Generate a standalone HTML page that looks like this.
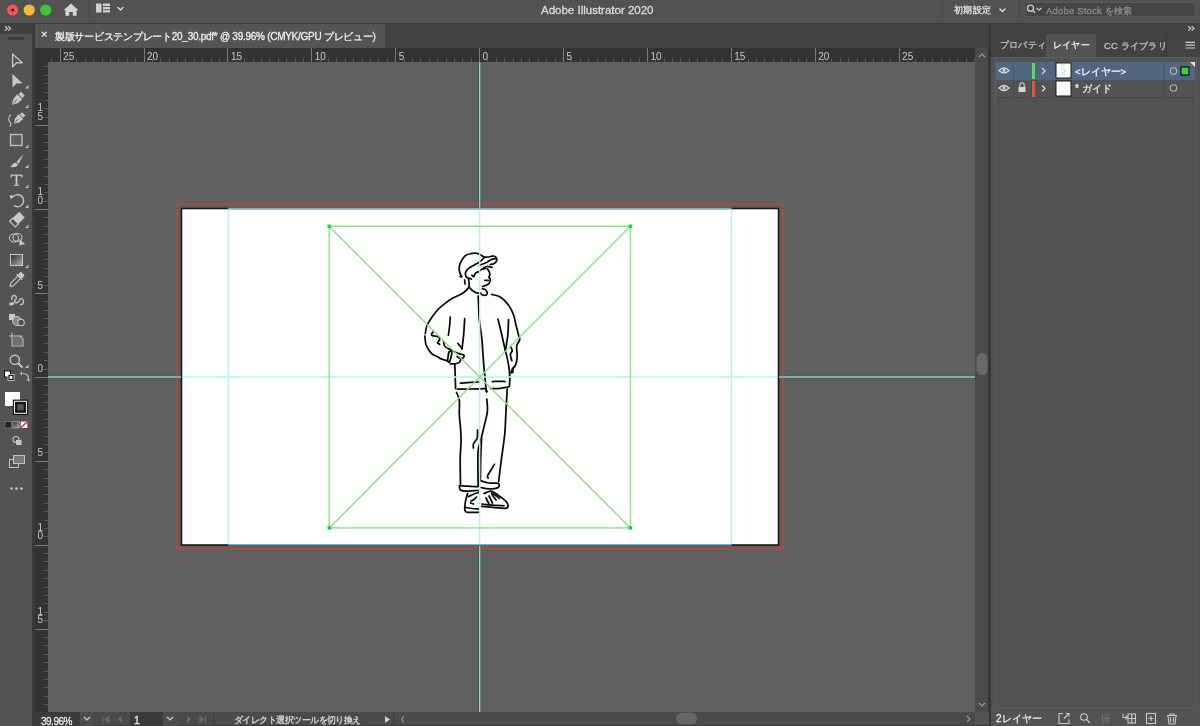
<!DOCTYPE html>
<html><head><meta charset="utf-8">
<style>
*{margin:0;padding:0;box-sizing:border-box}
html,body{width:1200px;height:726px;overflow:hidden;background:#606060;font-family:"Liberation Sans",sans-serif;color:#d6d6d6}
.a{position:absolute}
.t{position:absolute;white-space:nowrap;line-height:1;font-weight:500;will-change:transform;-webkit-text-stroke:0.3px currentColor}
#title{left:0;top:0;width:1200px;height:23px;background:#525252}
#tline{left:0;top:23px;width:1200px;height:1px;background:#3e3e3e}
#tool{left:0;top:23px;width:33px;height:703px;background:#535353}
#toolhdr{left:0;top:23px;width:33px;height:10.5px;background:#404040}
#gap{left:32px;top:23px;width:3px;height:703px;background:#3a3a3a}
#tabstrip{left:35px;top:23px;width:954px;height:25px;background:#424242}
#tab{left:35px;top:23px;width:350px;height:25px;background:#545454}
#rulerT{left:35px;top:48px;width:940px;height:14px;background:#333333}
#rulerL{left:35px;top:48px;width:13px;height:664px;background:#333333}
#canvas{left:48px;top:62px;width:927px;height:650px;background:#606060}
#vscroll{left:975px;top:48px;width:14px;height:678px;background:#4b4b4b}
#sep{left:988px;top:23px;width:3px;height:703px;background:#363636}
#panel{left:991px;top:23px;width:209px;height:703px;background:#535353}
#panelhdr{left:991px;top:23px;width:209px;height:11px;background:#424242}
#tabrow{left:991px;top:34px;width:209px;height:23px;background:#434343}
#status{left:35px;top:712px;width:954px;height:14px;background:#4a4a4a}
</style></head>
<body>
<div id="title" class="a"></div>
<div id="tool" class="a"></div>
<div id="toolhdr" class="a"></div>
<div id="gap" class="a"></div>
<div id="tabstrip" class="a"></div>
<div id="tab" class="a"></div>
<div id="rulerT" class="a"></div>
<div id="rulerL" class="a"></div>
<div id="canvas" class="a"></div>
<div id="vscroll" class="a"></div>
<div id="sep" class="a"></div>
<div id="panel" class="a"></div>
<div id="panelhdr" class="a"></div>
<div id="tabrow" class="a"></div>
<div id="status" class="a"></div>
<div id="tline" class="a"></div>

<!-- title bar content -->
<svg class="a" style="left:0;top:0" width="1200" height="23">
  <circle cx="12.6" cy="10" r="5.6" fill="#f25a55"/>
  <circle cx="12.6" cy="10" r="1.6" fill="#5a0c0a"/>
  <circle cx="29.2" cy="10" r="5.6" fill="#f5b93a"/>
  <circle cx="45.7" cy="10" r="5.6" fill="#3cc63f"/>
  <path d="M71 3.5 L78.5 10.2 L76.6 10.2 L76.6 15.7 L72.8 15.7 L72.8 12 L69.2 12 L69.2 15.7 L65.4 15.7 L65.4 10.2 L63.5 10.2 Z" fill="#d4d4d4"/>
  <rect x="88.5" y="0" width="1" height="17" fill="#474747"/>
  <rect x="96" y="3.5" width="5.5" height="9" fill="#d0d0d0"/>
  <rect x="103" y="3.5" width="7" height="2.5" fill="#d0d0d0"/>
  <rect x="103" y="7" width="7" height="2.3" fill="#d0d0d0"/>
  <rect x="103" y="10.2" width="7" height="2.3" fill="#d0d0d0"/>
  <path d="M117.5 7 L120.5 10 L123.5 7" fill="none" stroke="#d8d8d8" stroke-width="1.4"/>
  <rect x="942" y="0" width="1" height="17" fill="#474747"/>
  <path d="M999.5 8.5 L1002.5 11.5 L1005.5 8.5" fill="none" stroke="#d8d8d8" stroke-width="1.4"/>
  <rect x="1018" y="0" width="1" height="17" fill="#474747"/>
  <rect x="1025" y="2.5" width="170" height="14" rx="2" fill="#464646" stroke="#595959" stroke-width="1"/>
  <circle cx="1030.5" cy="8.2" r="3" fill="none" stroke="#c8c8c8" stroke-width="1.3"/>
  <path d="M1032.6 10.3 L1035 12.8" stroke="#c8c8c8" stroke-width="1.5"/>
  <path d="M1036.5 8 L1039 10.3 L1041.5 8" fill="none" stroke="#c8c8c8" stroke-width="1.2"/>
</svg>
<div class="t" style="left:541px;top:4.5px;font-size:11.5px;color:#dcdcdc">Adobe Illustrator 2020</div>
<div class="t" style="left:953.5px;top:6px;font-size:9px;letter-spacing:0.3px;color:#e0e0e0">初期設定</div>
<div class="t" style="left:1045.5px;top:6px;font-size:9.4px;letter-spacing:0.25px;color:#8a8a8a">Adobe Stock を検索</div>

<!-- toolbar header -->
<svg class="a" style="left:0;top:23px" width="33" height="20">
  <path d="M5 3.2 L7.3 5.4 L5 7.6 M8.2 3.2 L10.5 5.4 L8.2 7.6" fill="none" stroke="#c4c4c4" stroke-width="1.3"/>
  <rect x="8" y="14" width="16" height="3" fill="#3c3c3c"/>
</svg>

<!-- document tab -->
<div class="t" style="left:41px;top:29px;font-size:11px;color:#e8e8e8">×</div>
<div class="t" style="left:55px;top:32px;font-size:10px;letter-spacing:-0.27px;color:#eeeeee">製版サービステンプレート20_30.pdf* @ 39.96% (CMYK/GPU プレビュー)</div>

<svg class="a" style="left:0;top:0;will-change:transform" width="1200" height="726"><rect x="51" y="58.5" width="1" height="3.5" fill="#585858"/><rect x="60" y="48" width="1" height="14" fill="#7a7a7a"/><rect x="68" y="58.5" width="1" height="3.5" fill="#585858"/><rect x="76" y="58.5" width="1" height="3.5" fill="#585858"/><rect x="85" y="58.5" width="1" height="3.5" fill="#585858"/><rect x="93" y="58.5" width="1" height="3.5" fill="#585858"/><rect x="102" y="58.5" width="1" height="3.5" fill="#585858"/><rect x="110" y="58.5" width="1" height="3.5" fill="#585858"/><rect x="118" y="58.5" width="1" height="3.5" fill="#585858"/><rect x="127" y="58.5" width="1" height="3.5" fill="#585858"/><rect x="135" y="58.5" width="1" height="3.5" fill="#585858"/><rect x="144" y="48" width="1" height="14" fill="#7a7a7a"/><rect x="152" y="58.5" width="1" height="3.5" fill="#585858"/><rect x="160" y="58.5" width="1" height="3.5" fill="#585858"/><rect x="169" y="58.5" width="1" height="3.5" fill="#585858"/><rect x="177" y="58.5" width="1" height="3.5" fill="#585858"/><rect x="185" y="58.5" width="1" height="3.5" fill="#585858"/><rect x="194" y="58.5" width="1" height="3.5" fill="#585858"/><rect x="202" y="58.5" width="1" height="3.5" fill="#585858"/><rect x="211" y="58.5" width="1" height="3.5" fill="#585858"/><rect x="219" y="58.5" width="1" height="3.5" fill="#585858"/><rect x="227" y="48" width="1" height="14" fill="#7a7a7a"/><rect x="236" y="58.5" width="1" height="3.5" fill="#585858"/><rect x="244" y="58.5" width="1" height="3.5" fill="#585858"/><rect x="253" y="58.5" width="1" height="3.5" fill="#585858"/><rect x="261" y="58.5" width="1" height="3.5" fill="#585858"/><rect x="269" y="58.5" width="1" height="3.5" fill="#585858"/><rect x="278" y="58.5" width="1" height="3.5" fill="#585858"/><rect x="286" y="58.5" width="1" height="3.5" fill="#585858"/><rect x="295" y="58.5" width="1" height="3.5" fill="#585858"/><rect x="303" y="58.5" width="1" height="3.5" fill="#585858"/><rect x="311" y="48" width="1" height="14" fill="#7a7a7a"/><rect x="320" y="58.5" width="1" height="3.5" fill="#585858"/><rect x="328" y="58.5" width="1" height="3.5" fill="#585858"/><rect x="336" y="58.5" width="1" height="3.5" fill="#585858"/><rect x="345" y="58.5" width="1" height="3.5" fill="#585858"/><rect x="353" y="58.5" width="1" height="3.5" fill="#585858"/><rect x="362" y="58.5" width="1" height="3.5" fill="#585858"/><rect x="370" y="58.5" width="1" height="3.5" fill="#585858"/><rect x="378" y="58.5" width="1" height="3.5" fill="#585858"/><rect x="387" y="58.5" width="1" height="3.5" fill="#585858"/><rect x="395" y="48" width="1" height="14" fill="#7a7a7a"/><rect x="404" y="58.5" width="1" height="3.5" fill="#585858"/><rect x="412" y="58.5" width="1" height="3.5" fill="#585858"/><rect x="420" y="58.5" width="1" height="3.5" fill="#585858"/><rect x="429" y="58.5" width="1" height="3.5" fill="#585858"/><rect x="437" y="58.5" width="1" height="3.5" fill="#585858"/><rect x="446" y="58.5" width="1" height="3.5" fill="#585858"/><rect x="454" y="58.5" width="1" height="3.5" fill="#585858"/><rect x="462" y="58.5" width="1" height="3.5" fill="#585858"/><rect x="471" y="58.5" width="1" height="3.5" fill="#585858"/><rect x="479" y="48" width="1" height="14" fill="#7a7a7a"/><rect x="487" y="58.5" width="1" height="3.5" fill="#585858"/><rect x="496" y="58.5" width="1" height="3.5" fill="#585858"/><rect x="504" y="58.5" width="1" height="3.5" fill="#585858"/><rect x="513" y="58.5" width="1" height="3.5" fill="#585858"/><rect x="521" y="58.5" width="1" height="3.5" fill="#585858"/><rect x="529" y="58.5" width="1" height="3.5" fill="#585858"/><rect x="538" y="58.5" width="1" height="3.5" fill="#585858"/><rect x="546" y="58.5" width="1" height="3.5" fill="#585858"/><rect x="555" y="58.5" width="1" height="3.5" fill="#585858"/><rect x="563" y="48" width="1" height="14" fill="#7a7a7a"/><rect x="571" y="58.5" width="1" height="3.5" fill="#585858"/><rect x="580" y="58.5" width="1" height="3.5" fill="#585858"/><rect x="588" y="58.5" width="1" height="3.5" fill="#585858"/><rect x="597" y="58.5" width="1" height="3.5" fill="#585858"/><rect x="605" y="58.5" width="1" height="3.5" fill="#585858"/><rect x="613" y="58.5" width="1" height="3.5" fill="#585858"/><rect x="622" y="58.5" width="1" height="3.5" fill="#585858"/><rect x="630" y="58.5" width="1" height="3.5" fill="#585858"/><rect x="639" y="58.5" width="1" height="3.5" fill="#585858"/><rect x="647" y="48" width="1" height="14" fill="#7a7a7a"/><rect x="655" y="58.5" width="1" height="3.5" fill="#585858"/><rect x="664" y="58.5" width="1" height="3.5" fill="#585858"/><rect x="672" y="58.5" width="1" height="3.5" fill="#585858"/><rect x="680" y="58.5" width="1" height="3.5" fill="#585858"/><rect x="689" y="58.5" width="1" height="3.5" fill="#585858"/><rect x="697" y="58.5" width="1" height="3.5" fill="#585858"/><rect x="706" y="58.5" width="1" height="3.5" fill="#585858"/><rect x="714" y="58.5" width="1" height="3.5" fill="#585858"/><rect x="722" y="58.5" width="1" height="3.5" fill="#585858"/><rect x="731" y="48" width="1" height="14" fill="#7a7a7a"/><rect x="739" y="58.5" width="1" height="3.5" fill="#585858"/><rect x="748" y="58.5" width="1" height="3.5" fill="#585858"/><rect x="756" y="58.5" width="1" height="3.5" fill="#585858"/><rect x="764" y="58.5" width="1" height="3.5" fill="#585858"/><rect x="773" y="58.5" width="1" height="3.5" fill="#585858"/><rect x="781" y="58.5" width="1" height="3.5" fill="#585858"/><rect x="790" y="58.5" width="1" height="3.5" fill="#585858"/><rect x="798" y="58.5" width="1" height="3.5" fill="#585858"/><rect x="806" y="58.5" width="1" height="3.5" fill="#585858"/><rect x="815" y="48" width="1" height="14" fill="#7a7a7a"/><rect x="823" y="58.5" width="1" height="3.5" fill="#585858"/><rect x="831" y="58.5" width="1" height="3.5" fill="#585858"/><rect x="840" y="58.5" width="1" height="3.5" fill="#585858"/><rect x="848" y="58.5" width="1" height="3.5" fill="#585858"/><rect x="857" y="58.5" width="1" height="3.5" fill="#585858"/><rect x="865" y="58.5" width="1" height="3.5" fill="#585858"/><rect x="873" y="58.5" width="1" height="3.5" fill="#585858"/><rect x="882" y="58.5" width="1" height="3.5" fill="#585858"/><rect x="890" y="58.5" width="1" height="3.5" fill="#585858"/><rect x="899" y="48" width="1" height="14" fill="#7a7a7a"/><rect x="907" y="58.5" width="1" height="3.5" fill="#585858"/><rect x="915" y="58.5" width="1" height="3.5" fill="#585858"/><rect x="924" y="58.5" width="1" height="3.5" fill="#585858"/><rect x="932" y="58.5" width="1" height="3.5" fill="#585858"/><rect x="941" y="58.5" width="1" height="3.5" fill="#585858"/><rect x="949" y="58.5" width="1" height="3.5" fill="#585858"/><rect x="957" y="58.5" width="1" height="3.5" fill="#585858"/><rect x="966" y="58.5" width="1" height="3.5" fill="#585858"/><rect x="974" y="58.5" width="1" height="3.5" fill="#585858"/><rect x="44" y="66" width="4" height="1" fill="#585858"/><rect x="44" y="75" width="4" height="1" fill="#585858"/><rect x="44" y="83" width="4" height="1" fill="#585858"/><rect x="44" y="92" width="4" height="1" fill="#585858"/><rect x="44" y="100" width="4" height="1" fill="#585858"/><rect x="44" y="108" width="4" height="1" fill="#585858"/><rect x="44" y="117" width="4" height="1" fill="#585858"/><rect x="35" y="125" width="13" height="1" fill="#7a7a7a"/><rect x="44" y="134" width="4" height="1" fill="#585858"/><rect x="44" y="142" width="4" height="1" fill="#585858"/><rect x="44" y="150" width="4" height="1" fill="#585858"/><rect x="44" y="159" width="4" height="1" fill="#585858"/><rect x="44" y="167" width="4" height="1" fill="#585858"/><rect x="44" y="176" width="4" height="1" fill="#585858"/><rect x="44" y="184" width="4" height="1" fill="#585858"/><rect x="44" y="192" width="4" height="1" fill="#585858"/><rect x="44" y="201" width="4" height="1" fill="#585858"/><rect x="35" y="209" width="13" height="1" fill="#7a7a7a"/><rect x="44" y="217" width="4" height="1" fill="#585858"/><rect x="44" y="226" width="4" height="1" fill="#585858"/><rect x="44" y="234" width="4" height="1" fill="#585858"/><rect x="44" y="243" width="4" height="1" fill="#585858"/><rect x="44" y="251" width="4" height="1" fill="#585858"/><rect x="44" y="259" width="4" height="1" fill="#585858"/><rect x="44" y="268" width="4" height="1" fill="#585858"/><rect x="44" y="276" width="4" height="1" fill="#585858"/><rect x="44" y="285" width="4" height="1" fill="#585858"/><rect x="35" y="293" width="13" height="1" fill="#7a7a7a"/><rect x="44" y="301" width="4" height="1" fill="#585858"/><rect x="44" y="310" width="4" height="1" fill="#585858"/><rect x="44" y="318" width="4" height="1" fill="#585858"/><rect x="44" y="327" width="4" height="1" fill="#585858"/><rect x="44" y="335" width="4" height="1" fill="#585858"/><rect x="44" y="343" width="4" height="1" fill="#585858"/><rect x="44" y="352" width="4" height="1" fill="#585858"/><rect x="44" y="360" width="4" height="1" fill="#585858"/><rect x="44" y="369" width="4" height="1" fill="#585858"/><rect x="35" y="377" width="13" height="1" fill="#7a7a7a"/><rect x="44" y="385" width="4" height="1" fill="#585858"/><rect x="44" y="394" width="4" height="1" fill="#585858"/><rect x="44" y="402" width="4" height="1" fill="#585858"/><rect x="44" y="410" width="4" height="1" fill="#585858"/><rect x="44" y="419" width="4" height="1" fill="#585858"/><rect x="44" y="427" width="4" height="1" fill="#585858"/><rect x="44" y="436" width="4" height="1" fill="#585858"/><rect x="44" y="444" width="4" height="1" fill="#585858"/><rect x="44" y="452" width="4" height="1" fill="#585858"/><rect x="35" y="461" width="13" height="1" fill="#7a7a7a"/><rect x="44" y="469" width="4" height="1" fill="#585858"/><rect x="44" y="478" width="4" height="1" fill="#585858"/><rect x="44" y="486" width="4" height="1" fill="#585858"/><rect x="44" y="494" width="4" height="1" fill="#585858"/><rect x="44" y="503" width="4" height="1" fill="#585858"/><rect x="44" y="511" width="4" height="1" fill="#585858"/><rect x="44" y="520" width="4" height="1" fill="#585858"/><rect x="44" y="528" width="4" height="1" fill="#585858"/><rect x="44" y="536" width="4" height="1" fill="#585858"/><rect x="35" y="545" width="13" height="1" fill="#7a7a7a"/><rect x="44" y="553" width="4" height="1" fill="#585858"/><rect x="44" y="561" width="4" height="1" fill="#585858"/><rect x="44" y="570" width="4" height="1" fill="#585858"/><rect x="44" y="578" width="4" height="1" fill="#585858"/><rect x="44" y="587" width="4" height="1" fill="#585858"/><rect x="44" y="595" width="4" height="1" fill="#585858"/><rect x="44" y="603" width="4" height="1" fill="#585858"/><rect x="44" y="612" width="4" height="1" fill="#585858"/><rect x="44" y="620" width="4" height="1" fill="#585858"/><rect x="35" y="629" width="13" height="1" fill="#7a7a7a"/><rect x="44" y="637" width="4" height="1" fill="#585858"/><rect x="44" y="645" width="4" height="1" fill="#585858"/><rect x="44" y="654" width="4" height="1" fill="#585858"/><rect x="44" y="662" width="4" height="1" fill="#585858"/><rect x="44" y="671" width="4" height="1" fill="#585858"/><rect x="44" y="679" width="4" height="1" fill="#585858"/><rect x="44" y="687" width="4" height="1" fill="#585858"/><rect x="44" y="696" width="4" height="1" fill="#585858"/><rect x="44" y="704" width="4" height="1" fill="#585858"/><text x="63.1" y="59.5" font-size="10" fill="#c8c8c8">25</text><text x="147.0" y="59.5" font-size="10" fill="#c8c8c8">20</text><text x="230.9" y="59.5" font-size="10" fill="#c8c8c8">15</text><text x="314.8" y="59.5" font-size="10" fill="#c8c8c8">10</text><text x="398.7" y="59.5" font-size="10" fill="#c8c8c8">5</text><text x="482.6" y="59.5" font-size="10" fill="#c8c8c8">0</text><text x="566.5" y="59.5" font-size="10" fill="#c8c8c8">5</text><text x="650.4" y="59.5" font-size="10" fill="#c8c8c8">10</text><text x="734.3" y="59.5" font-size="10" fill="#c8c8c8">15</text><text x="818.2" y="59.5" font-size="10" fill="#c8c8c8">20</text><text x="902.1" y="59.5" font-size="10" fill="#c8c8c8">25</text><text x="37.5" y="111.2" font-size="10" fill="#c8c8c8">1</text><text x="37.5" y="119.7" font-size="10" fill="#c8c8c8">5</text><text x="37.5" y="195.1" font-size="10" fill="#c8c8c8">1</text><text x="37.5" y="203.6" font-size="10" fill="#c8c8c8">0</text><text x="37.5" y="288.5" font-size="10" fill="#c8c8c8">5</text><text x="37.5" y="372.4" font-size="10" fill="#c8c8c8">0</text><text x="37.5" y="456.3" font-size="10" fill="#c8c8c8">5</text><text x="37.5" y="530.7" font-size="10" fill="#c8c8c8">1</text><text x="37.5" y="539.2" font-size="10" fill="#c8c8c8">0</text><text x="37.5" y="614.6" font-size="10" fill="#c8c8c8">1</text><text x="37.5" y="623.1" font-size="10" fill="#c8c8c8">5</text></svg>

<!-- artboard -->
<svg class="a" style="left:0;top:0" width="1200" height="726">
  <rect x="177" y="204.2" width="606" height="344.6" fill="none" stroke="#a24c48" stroke-width="2.1"/>
  <rect x="181.5" y="208.5" width="597" height="336.5" fill="#ffffff" stroke="#1a1a1a" stroke-width="1.6"/>
  <g fill="none" stroke="#0a0a0a" stroke-width="1.75" stroke-linecap="round" stroke-linejoin="round"><path d="M461.3,276.5C461.0,275.5 459.5,272.6 459.3,270.3C459.1,268.1 459.3,265.4 460.3,263.0C461.3,260.6 463.3,257.4 465.1,255.8C466.9,254.2 468.9,254.0 470.9,253.6C472.9,253.2 475.3,253.0 477.2,253.4C479.1,253.8 480.8,255.2 482.0,255.8C483.2,256.4 484.1,257.1 484.5,257.3"/><path d="M484.5,257.3C485.2,257.2 487.3,257.2 488.8,257.0C490.3,256.8 492.3,255.8 493.6,256.0C494.9,256.1 496.0,257.0 496.5,257.9C497.0,258.8 497.0,260.1 496.5,261.1C496.0,262.1 494.7,263.2 493.6,263.8C492.6,264.4 490.8,264.4 490.2,264.5"/><path d="M496.0,258.5C495.2,258.7 492.6,259.1 491.0,259.8C489.4,260.5 488.0,261.8 486.5,262.5C485.0,263.2 483.2,263.8 482.0,264.3C480.8,264.8 479.9,265.1 479.5,265.3"/><path d="M484.5,257.3C483.8,258.0 481.7,260.3 480.0,261.6C478.3,262.9 476.1,264.0 474.3,265.0C472.6,266.0 470.9,266.8 469.5,267.8C468.1,268.8 466.8,270.1 466.1,271.2C465.4,272.3 465.2,273.4 465.4,274.5C465.5,275.6 466.0,276.8 467.0,277.5C468.0,278.2 470.7,278.8 471.4,279.0"/><path d="M471.9,275.1C472.2,275.4 473.2,276.9 473.8,276.6C474.4,276.3 474.4,274.3 475.3,273.4C476.2,272.5 478.0,272.1 479.1,271.4C480.2,270.7 480.9,269.8 482.0,269.3C483.1,268.8 484.9,268.5 485.5,268.4"/><path d="M483.5,268.0C484.1,267.8 485.6,266.6 487.0,266.5C488.4,266.4 491.2,267.2 492.1,267.4"/><path d="M487.3,268.8C487.7,269.4 489.1,271.4 489.5,272.5C489.9,273.6 489.8,274.9 489.7,275.6C489.6,276.4 488.7,276.4 488.8,277.0C488.9,277.6 490.0,278.2 490.2,279.0C490.4,279.8 490.3,281.1 489.9,282.0C489.5,282.9 488.8,283.9 487.6,284.6C486.4,285.4 483.4,286.2 482.5,286.5"/><path d="M485.0,280.4L488.3,280.4"/><path d="M464.6,280.0L465.1,284.0"/><path d="M468.5,279.4C468.6,280.1 469.2,282.4 469.2,283.8C469.2,285.2 469.3,286.2 468.6,287.5C467.9,288.8 466.3,290.4 465.0,291.5C463.7,292.6 463.1,293.1 460.9,294.3C458.7,295.5 454.7,296.9 452.0,298.5C449.3,300.1 447.1,301.8 444.8,303.6C442.5,305.4 440.1,307.3 438.0,309.5C435.9,311.7 434.0,314.2 432.1,317.0C430.2,319.8 427.9,323.2 426.8,326.0C425.7,328.8 425.6,332.3 425.3,333.6"/><path d="M468.8,286.8C469.4,287.4 471.2,289.5 472.5,290.5C473.8,291.5 475.2,292.4 476.5,292.8C477.8,293.2 479.8,293.1 480.5,293.2"/><path d="M482.4,288.7C482.9,288.9 484.4,289.0 485.2,289.6C486.0,290.2 487.0,291.5 487.2,292.4C487.4,293.3 487.3,294.6 486.5,295.0C485.7,295.4 483.5,295.3 482.5,295.0C481.5,294.7 480.8,293.5 480.5,293.2"/><path d="M424.9,336.0C425.1,337.5 425.0,342.1 426.1,345.0C427.2,347.9 429.4,351.3 431.4,353.3C433.4,355.3 436.7,356.2 438.2,357.1C439.7,358.0 439.4,358.1 440.5,358.6C441.6,359.1 443.8,359.8 445.0,360.2C446.2,360.6 447.3,360.9 447.8,361.0"/><path d="M447.5,361.0C447.8,359.5 448.3,353.4 449.0,352.0C449.7,350.6 451.7,351.2 451.8,352.8C451.9,354.4 450.3,360.4 449.6,361.8C448.9,363.2 447.9,361.1 447.5,361.0"/><path d="M443.5,341.2C443.8,342.1 443.6,345.0 445.0,346.5C446.4,348.0 449.7,349.2 451.8,350.3C453.9,351.4 456.0,352.6 457.9,353.3C459.8,354.1 462.2,354.1 463.2,354.8C464.1,355.5 464.0,357.0 463.6,357.6C463.2,358.2 462.0,358.8 460.9,358.6C459.8,358.4 457.7,356.8 457.1,356.4"/><path d="M460.9,359.2C460.6,359.7 460.4,361.6 459.4,362.4C458.4,363.2 456.3,363.6 454.8,363.9C453.3,364.1 451.1,363.9 450.3,363.9"/><path d="M433.6,331.4C433.3,332.0 430.8,334.3 431.6,335.2C432.4,336.1 436.9,335.9 438.2,336.7C439.5,337.4 439.8,338.7 439.7,339.7C439.6,340.7 437.4,341.9 437.4,342.7C437.4,343.4 439.3,343.9 439.7,344.2"/><path d="M450.3,317.0C450.2,318.5 449.9,323.0 449.6,326.0C449.3,329.0 448.6,333.7 448.4,335.2"/><path d="M464.7,318.5C464.6,320.4 464.2,326.6 464.0,330.0C463.8,333.4 463.5,335.8 463.2,338.9C462.9,342.0 462.2,347.1 462.0,348.8"/><path d="M457.9,343.5C458.2,343.9 459.3,345.1 460.0,346.0C460.7,346.9 461.7,348.3 462.0,348.8"/><path d="M478.2,296.0C478.3,297.5 478.4,300.9 478.6,304.9C478.8,308.9 478.8,314.2 479.3,320.0C479.9,325.8 481.2,332.2 481.9,339.6C482.6,347.0 483.1,357.6 483.7,364.3C484.2,371.0 484.8,375.6 485.2,380.0C485.6,384.4 486.1,389.2 486.3,391.0"/><path d="M491.8,294.3C493.3,294.8 498.2,295.6 501.0,297.4C503.8,299.2 506.4,302.0 508.5,304.9C510.6,307.8 512.3,311.5 513.5,314.8C514.7,318.1 515.1,321.4 515.9,324.7C516.7,328.0 517.8,332.1 518.4,334.6C519.0,337.1 519.9,338.0 519.7,339.6C519.5,341.2 517.7,343.1 517.2,344.5C516.7,345.9 516.6,346.3 516.6,348.2C516.6,350.1 517.3,353.0 517.2,355.7C517.1,358.4 516.7,362.0 515.9,364.3C515.1,366.6 513.0,367.9 512.2,369.3C511.4,370.8 511.2,372.4 511.0,373.0"/><path d="M498.0,319.1C498.6,321.8 500.6,329.7 501.8,335.0C503.0,340.3 504.8,348.1 505.4,350.7"/><path d="M508.5,319.7C508.4,322.2 508.3,329.8 507.8,335.0C507.3,340.2 505.8,348.1 505.4,350.7"/><path d="M505.4,350.7C505.9,353.0 507.8,359.9 508.5,364.3C509.2,368.7 509.7,373.3 509.8,377.0C509.9,380.7 509.5,384.9 509.4,386.5"/><path d="M510.4,346.4C510.7,347.1 512.2,349.4 512.2,350.7C512.2,352.0 510.5,352.8 510.4,354.4C510.3,356.0 511.6,359.6 511.8,360.6"/><path d="M454.8,364.7C454.9,366.4 455.1,371.0 455.2,375.0C455.3,379.0 455.5,386.4 455.6,388.7"/><path d="M457.6,389.2C459.7,389.2 465.4,389.1 470.0,389.0C474.6,388.9 482.7,388.8 485.2,388.7"/><path d="M490.7,388.7C492.2,388.6 497.1,388.6 500.0,388.3C502.9,388.0 506.9,387.2 508.3,387.0"/><path d="M460.4,383.2C462.0,383.1 467.0,382.6 470.0,382.4C473.0,382.2 477.2,382.1 478.6,382.0"/><path d="M492.3,381.5C493.6,381.5 497.9,381.3 500.0,381.3C502.1,381.3 504.2,381.5 505.0,381.5"/><path d="M512.7,372.7C512.8,372.0 512.8,369.6 513.2,368.5C513.6,367.4 514.7,366.4 515.0,366.0"/><path d="M456.5,392.5C457.0,393.8 458.8,396.6 459.3,400.3C459.8,404.0 459.1,410.2 459.3,414.6C459.5,419.0 460.1,422.5 460.4,426.7C460.7,430.9 461.1,434.7 461.1,440.0C461.1,445.3 460.3,451.0 460.2,458.4C460.1,465.8 460.4,479.9 460.5,484.2"/><path d="M486.8,399.2C486.9,401.2 487.9,406.7 487.4,411.3C486.9,415.9 485.1,421.9 484.0,426.7C482.9,431.5 481.8,435.7 480.8,440.0C479.8,444.3 478.4,445.0 478.0,452.6C477.6,460.2 478.1,479.9 478.1,485.4"/><path d="M481.6,438.0C481.5,440.8 481.0,448.1 480.8,455.0C480.6,461.9 480.5,475.4 480.4,479.5"/><path d="M477.5,430.0C477.4,431.3 477.9,435.7 477.2,438.0C476.5,440.3 474.1,442.2 473.5,443.8C472.9,445.4 473.4,447.2 473.4,447.9"/><path d="M507.2,389.2C507.0,392.5 506.5,402.0 506.1,409.0C505.7,416.0 505.4,425.0 505.0,431.0C504.6,437.0 504.0,440.4 503.4,445.0C502.8,449.6 502.3,452.3 501.5,458.4C500.7,464.5 499.1,477.9 498.6,481.8"/><path d="M494.5,464.3C493.9,465.2 492.2,468.1 491.0,470.0C489.8,471.9 488.0,474.7 487.5,476.0C487.0,477.3 488.1,477.7 488.2,478.0"/><path d="M459.4,485.6C460.8,485.7 464.9,486.0 468.0,486.2C471.1,486.4 476.4,486.6 478.1,486.7"/><path d="M459.6,486.0C459.7,486.6 459.3,488.6 460.0,489.5C460.7,490.4 461.0,491.0 464.0,491.2C467.0,491.4 475.8,490.6 478.1,490.5"/><path d="M480.6,480.7C481.9,481.1 485.7,482.6 488.6,483.0C491.5,483.4 496.4,482.6 498.0,483.4C499.6,484.1 499.8,486.6 498.2,487.5C496.6,488.4 491.5,488.9 488.6,488.9C485.7,488.9 482.3,487.7 481.0,487.5"/><path d="M467.6,493.5C467.3,494.7 466.1,498.4 465.6,500.6C465.1,502.9 464.9,505.4 464.8,507.0C464.7,508.6 464.5,509.6 465.0,510.5C465.5,511.4 465.2,512.0 467.6,512.3C470.0,512.6 477.4,512.3 479.3,512.3"/><path d="M465.5,507.5C466.6,507.7 469.7,508.2 472.0,508.5C474.3,508.8 478.1,508.9 479.3,509.0"/><path d="M468.5,496.5C469.4,496.1 472.3,494.7 474.0,494.0C475.7,493.3 477.8,492.8 478.5,492.5"/><path d="M471.0,501.0C471.5,500.8 473.1,500.2 474.0,499.5C474.9,498.8 476.1,497.4 476.5,497.0"/><path d="M470.5,503.0L473.5,504.0"/><path d="M484.0,493.5C484.8,493.2 487.8,491.9 489.0,491.5C490.2,491.1 490.0,490.9 491.0,491.2C492.0,491.4 493.6,492.2 495.0,493.0C496.4,493.8 497.3,494.4 499.2,495.9C501.1,497.3 504.7,500.1 506.2,501.7C507.7,503.3 508.0,504.2 508.0,505.3C508.0,506.4 508.4,507.8 506.2,508.2C503.9,508.6 498.6,507.9 494.5,507.6C490.4,507.3 483.8,506.6 481.6,506.4"/><path d="M482.0,504.0C483.7,504.2 488.3,504.9 492.0,505.2C495.7,505.5 502.0,505.7 504.0,505.8"/><path d="M486.0,498.0L489.0,504.0"/><path d="M489.0,496.0L492.5,503.0"/><path d="M492.0,494.5L496.0,500.0"/><path d="M491.5,493.0C492.3,493.5 495.2,495.1 496.5,496.0C497.8,496.9 499.0,498.1 499.5,498.5"/></g><circle cx="461" cy="276.3" r="1.5" fill="#0a0a0a"/><circle cx="478.9" cy="308" r="1.1" fill="#000"/><circle cx="486.6" cy="391.5" r="1.2" fill="#000"/>
  <!-- guides rect -->
  <path d="M228.3 208.5 H731.5 M228.3 544.8 H731.5" stroke="#6fb8bc" stroke-width="1.6"/>
  <path d="M228.3 209 V544 M731.5 209 V544" stroke="#b2f3ee" stroke-width="1.2"/>
  <!-- main guides -->
  <path d="M48 377 H181 M779 377 H975 M479.7 62 V207.7 M479.7 545.8 V712" stroke="#4a5858" stroke-width="3.2"/>
  <path d="M48 377 H181 M779 377 H975 M479.7 62 V207.7 M479.7 545.8 V712" stroke="#8ecdc9" stroke-width="1.4"/>
  <path d="M182.3 377 H777.7 M479.7 209.3 V544" stroke="#b2f3ee" stroke-width="1.3"/>
  <!-- green rect -->
  <g stroke="#92dd8c" stroke-width="1.4" fill="none">
    <rect x="329.2" y="226.3" width="301.2" height="301.6"/>
    <path d="M329.2 226.3 L630.4 527.9 M630.4 226.3 L329.2 527.9"/>
  </g>
  <g fill="#14dc3c">
    <rect x="327.5" y="224.5" width="3.6" height="3.6"/>
    <rect x="628.6" y="224.5" width="3.6" height="3.6"/>
    <rect x="327.5" y="526.1" width="3.6" height="3.6"/>
    <rect x="628.6" y="526.1" width="3.6" height="3.6"/>
  </g>
</svg>

<!-- scrollbars -->
<svg class="a" style="left:0;top:0" width="1200" height="726">
  <path d="M979 57 L982 54 L985 57" fill="none" stroke="#9a9a9a" stroke-width="1.2"/>
  <rect x="976.5" y="353" width="11" height="22" rx="5.5" fill="#686868"/>
  <path d="M979 703 L982 706 L985 703" fill="none" stroke="#9a9a9a" stroke-width="1.2"/>
  <rect x="975" y="712" width="13.5" height="14" fill="#545454"/><rect x="35" y="725" width="954" height="1" fill="#3c3c3c"/>
  <rect x="676" y="712.8" width="21" height="11.5" rx="5.7" fill="#666666"/>
  <path d="M967 716 L970 719 L967 722" fill="none" stroke="#9a9a9a" stroke-width="1.1"/>
</svg>

<!-- status bar -->
<svg class="a" style="left:0;top:0" width="1200" height="726">
  <rect x="35" y="712" width="45" height="14" fill="#3b3b3b"/>
  <rect x="80" y="712" width="14" height="14" fill="#4e4e4e"/>
  <path d="M84 717 L87 720 L90 717" fill="none" stroke="#d0d0d0" stroke-width="1.2"/>
  <path d="M103 716 V723 M109 716 L105 719.5 L109 723 Z" stroke="#6a6a6a" fill="#6a6a6a" stroke-width="1"/>
  <path d="M122 716 L118 719.5 L122 723 Z" fill="#6a6a6a"/>
  <rect x="130" y="712" width="33" height="14" fill="#3b3b3b"/>
  <rect x="163" y="712" width="14" height="14" fill="#4e4e4e"/>
  <path d="M167 717 L170 720 L173 717" fill="none" stroke="#d0d0d0" stroke-width="1.2"/>
  <path d="M187 716 L191 719.5 L187 723 Z" fill="#6a6a6a"/>
  <path d="M200 716 L204 719.5 L200 723 Z M205.5 716 V723" fill="#6a6a6a" stroke="#6a6a6a" stroke-width="1"/>
  <rect x="213" y="712" width="1" height="14" fill="#3d3d3d"/>
  <path d="M385 716 L390 719.5 L385 723 Z" fill="#d0d0d0"/>
  <rect x="393" y="712" width="1" height="14" fill="#3d3d3d"/>
  <path d="M404 716.5 L401.5 719.5 L404 722.5" fill="none" stroke="#9a9a9a" stroke-width="1.1"/>
</svg>
<div class="t" style="left:41px;top:717px;font-size:10px;letter-spacing:-0.5px;color:#e8e8e8">39.96%</div>
<div class="t" style="left:134px;top:715px;font-size:10.5px;color:#e8e8e8">1</div>
<div class="t" style="left:234px;top:715.5px;font-size:9px;letter-spacing:-0.55px;color:#d8d8d8">ダイレクト選択ツールを切り換え</div>

<!-- right panel -->
<svg class="a" style="left:0;top:0" width="1200" height="726">
  <path d="M1188.3 26.2 L1190.6 28.4 L1188.3 30.6 M1191.6 26.2 L1193.9 28.4 L1191.6 30.6" fill="none" stroke="#c4c4c4" stroke-width="1.3"/>
  <rect x="991" y="34" width="55" height="23" fill="#424242"/>
  <rect x="1046" y="34" width="50" height="23" fill="#535353"/>
  <rect x="1096" y="34" width="70" height="23" fill="#424242"/>
  <rect x="1166" y="34" width="34" height="23" fill="#434343"/><rect x="1166" y="34" width="1" height="23" fill="#3a3a3a"/>
  <path d="M1185.5 42.4 H1195 M1185.5 45.2 H1195 M1185.5 48 H1195" stroke="#c8c8c8" stroke-width="1.2"/>
  <rect x="995.5" y="57.5" width="201" height="650" fill="#535353" stroke="#5c5c5c" stroke-width="1"/>
  <!-- row 1 -->
  <rect x="996" y="62" width="199" height="18" fill="#52667f"/>
  <rect x="1013" y="62" width="1" height="18" fill="#41567a"/>
  <rect x="1164" y="62" width="1" height="18" fill="#41567a"/>
  <rect x="1032" y="63" width="3" height="16" fill="#4ee24e"/>
  <rect x="1056" y="63" width="15" height="15" fill="#ffffff" stroke="#1a1a1a" stroke-width="1"/><path d="M1063 66.5 a1.3 1.3 0 1 1 0.1 0 M1061.5 69 L1065 69 L1064.5 72 M1062.5 72 L1062 76 M1064 72 L1064.5 76" fill="none" stroke="#b8b8b8" stroke-width="0.6"/>
  <path d="M1190 62 H1195 V67 Z" fill="#e8e8e8"/>
  <circle cx="1173.5" cy="71" r="3.4" fill="none" stroke="#c8c8c8" stroke-width="1"/>
  <rect x="1181" y="67" width="8" height="8" fill="#40d040" stroke="#111" stroke-width="1.2"/>
  <!-- row 2 -->
  <rect x="996" y="80" width="199" height="17" fill="#535353"/>
  <rect x="996" y="97" width="199" height="1" fill="#4a4a4a"/>
  <rect x="1013" y="80" width="1" height="17" fill="#4a4a4a"/>
  <rect x="1031" y="80" width="1" height="17" fill="#4a4a4a"/>
  <rect x="1164" y="80" width="1" height="17" fill="#4a4a4a"/>
  <rect x="1032" y="81" width="3" height="16" fill="#e85050"/>
  <rect x="1056" y="81" width="15" height="15" fill="#ffffff" stroke="#1a1a1a" stroke-width="1"/>
  <circle cx="1173.5" cy="88" r="3.4" fill="none" stroke="#c8c8c8" stroke-width="1"/>
  <!-- eyes -->
  <g fill="none" stroke="#dcdcdc" stroke-width="1.2">
    <path d="M999 70.5 Q1004 65.5 1009 70.5 Q1004 75.5 999 70.5 Z"/>
    <path d="M999 88 Q1004 83 1009 88 Q1004 93 999 88 Z"/>
  </g>
  <circle cx="1004" cy="70.5" r="1.4" fill="#dcdcdc"/>
  <circle cx="1004" cy="88" r="1.4" fill="#dcdcdc"/>
  <!-- lock -->
  <path d="M1019.8 87 V85 A2.2 2.2 0 0 1 1024.2 85 V87" fill="none" stroke="#d8d8d8" stroke-width="1.1"/>
  <rect x="1018.5" y="87" width="7" height="5" fill="#d8d8d8"/>
  <!-- chevrons -->
  <path d="M1042 68 L1045 71 L1042 74 M1042 85.5 L1045 88.5 L1042 91.5" fill="none" stroke="#dcdcdc" stroke-width="1.2"/>
  <!-- footer icons -->
  <g fill="none" stroke="#c8c8c8" stroke-width="1.1">
    <path d="M1063 713.5 H1059 V723.5 H1069 V719.5"/>
    <path d="M1064 718.5 L1069 713.5 M1066 713.5 H1069 V716.5"/>
    <circle cx="1084" cy="717" r="3.3"/>
    <path d="M1086.5 719.5 L1090 723"/>
    <path d="M1123 713.5 V717.5 H1127 M1125.5 715.5 L1127.5 717.5 L1125.5 719.5"/><rect x="1128" y="714" width="7.5" height="9"/><path d="M1131.75 714 V723 M1128 718.5 H1135.5"/>
    <rect x="1146.5" y="713.5" width="9" height="10"/>
    <path d="M1151 716 V721 M1148.5 718.5 H1153.5"/>
    <path d="M1167 715.5 H1177 M1170 715.5 V714 H1174 V715.5 M1168 715.5 L1169 724 H1175 L1176 715.5 M1170.5 717 V722.5 M1173.5 717 V722.5"/>
  </g>
  <rect x="1102.5" y="715" width="6.5" height="7" fill="none" stroke="#6a6a6a" stroke-width="1"/><rect x="1104.5" y="717" width="4" height="3.5" fill="#6a6a6a"/>
</svg>
<div class="t" style="left:999.5px;top:41px;font-size:9px;letter-spacing:0.2px;color:#c0c0c0">プロパティ</div>
<div class="t" style="left:1053px;top:41px;font-size:9px;letter-spacing:0.2px;color:#ececec">レイヤー</div>
<div class="t" style="left:1103.5px;top:41px;font-size:9.4px;letter-spacing:0.2px;color:#c0c0c0">CC ライブラリ</div>
<div class="t" style="left:1075px;top:66.5px;font-size:9.6px;color:#eef2f8">&lt;レイヤー&gt;</div>
<div class="t" style="left:1075px;top:83.5px;font-size:10px;color:#e6e6e6">* ガイド</div>
<div class="t" style="left:996px;top:713.5px;font-size:10px;color:#e6e6e6">2レイヤー</div>

<svg class="a" style="left:0;top:0" width="34" height="500">
 <g fill="#c4c4c4" stroke="none">
  <!-- small corner triangles -->
  <path d="M25 88.5 L28.5 88.5 L28.5 85 Z"/>
  <path d="M25 108 L28.5 108 L28.5 104.5 Z"/>
  <path d="M25 148 L28.5 148 L28.5 144.5 Z"/>
  <path d="M25 168 L28.5 168 L28.5 164.5 Z"/>
  <path d="M25 188 L28.5 188 L28.5 184.5 Z"/>
  <path d="M25 208 L28.5 208 L28.5 204.5 Z"/>
  <path d="M25 228 L28.5 228 L28.5 224.5 Z"/>
  <path d="M25 268 L28.5 268 L28.5 264.5 Z"/>
  <path d="M25 368 L28.5 368 L28.5 364.5 Z"/>
 </g>
 <!-- selection -->
 <path d="M12.6 54 L12.6 66.8 L16.6 62.8 L22.3 62.8 Z" fill="none" stroke="#c4c4c4" stroke-width="1.4" stroke-linejoin="round"/>
 <!-- direct selection -->
 <path d="M12.4 73.8 L12.6 87.6 L16.7 83.2 L22.6 83.4 Z" fill="#c8c8c8"/>
 <!-- pen -->
 <g transform="translate(16.5,100) rotate(45)">
  <rect x="-2.6" y="-9" width="5.2" height="3.6" fill="#c8c8c8"/>
  <path d="M-3.6 -4.6 H3.6 L3 1.5 L0 6.8 L-3 1.5 Z" fill="#c8c8c8"/>
  <path d="M0 -1 V5" stroke="#525252" stroke-width="0.9"/>
 </g>
 <!-- curvature pen -->
 <g transform="translate(18,119.5) rotate(45)">
  <rect x="-2.4" y="-8" width="4.8" height="3.2" fill="#c8c8c8"/>
  <path d="M-3.3 -4 H3.3 L2.8 1.4 L0 6 L-2.8 1.4 Z" fill="#c8c8c8"/>
  <path d="M0 -0.8 V4.5" stroke="#525252" stroke-width="0.9"/>
 </g>
 <path d="M11 114.5 C7.5 117 8.5 121 10.5 123 C11.5 124.5 10.5 126 9.5 126.5" fill="none" stroke="#c4c4c4" stroke-width="1.1"/>
 <!-- rectangle -->
 <rect x="10.5" y="134.5" width="11.5" height="11" fill="#5e5e5e" stroke="#c4c4c4" stroke-width="1.3"/>
 <!-- paintbrush -->
 <path d="M23.8 153.8 L16.5 162 L18.5 164 Z" fill="#c8c8c8"/>
 <path d="M15.8 162.6 L17.9 164.7 C17 167 13 167.5 10.5 167 C12 165.5 12.5 163.5 15.8 162.6 Z" fill="#c8c8c8"/>
 <!-- type -->
 <path d="M10.6 174.5 H22.4 V177.6 H21.4 L20.8 175.8 H17.4 V184.6 L19.2 185 V185.8 H13.8 V185 L15.6 184.6 V175.8 H12.2 L11.6 177.6 H10.6 Z" fill="#c8c8c8"/>
 <!-- rotate -->
 <path d="M12.5 197.5 A6 6 0 1 1 14 205.5" fill="none" stroke="#c4c4c4" stroke-width="1.4" stroke-dasharray="none"/>
 <path d="M9.5 195 L13.5 196 L11 199.5 Z" fill="#c8c8c8"/>
 <!-- eraser -->
 <g transform="translate(17,219.5) rotate(45)">
  <rect x="-4" y="-7" width="8" height="9" fill="#c8c8c8"/>
  <rect x="-4" y="2" width="8" height="4.5" fill="none" stroke="#c8c8c8" stroke-width="1.2"/>
 </g>
 <!-- shape builder -->
 <ellipse cx="14" cy="238" rx="4.5" ry="4" fill="none" stroke="#c4c4c4" stroke-width="1.1"/>
 <ellipse cx="17.5" cy="237.5" rx="4.5" ry="4" fill="none" stroke="#c4c4c4" stroke-width="1.1"/>
 <path d="M19.5 238.5 L19.5 246.5 L21.5 244.5 L25 244.5 Z" fill="#c8c8c8"/>
 <!-- gradient -->
 <defs><linearGradient id="gr" x1="0" y1="0" x2="1" y2="1"><stop offset="0" stop-color="#2a2a2a"/><stop offset="1" stop-color="#b0b0b0"/></linearGradient></defs>
 <rect x="10.5" y="254.5" width="12" height="11" fill="url(#gr)" stroke="#c4c4c4" stroke-width="1.1"/>
 <!-- eyedropper -->
 <g transform="translate(16.5,280) rotate(45)">
  <rect x="-2.8" y="-9" width="5.6" height="4" rx="1" fill="#c8c8c8"/>
  <rect x="-3.8" y="-5" width="7.6" height="1.6" fill="#c8c8c8"/>
  <path d="M-1.8 -3.4 V6.5 L0 9 L1.8 6.5 V-3.4" fill="none" stroke="#c8c8c8" stroke-width="1.1"/>
 </g>
 <!-- puppet warp -->
 <path d="M12 300 C11 296 14 294.5 16 296.5 C17.5 298 15 300 14.5 301.5 C16 303.5 19 303 19.5 300 C20 298 23 298 23.5 301 C24 303.5 22 305 20 304.5" fill="none" stroke="#c4c4c4" stroke-width="1.4"/>
 <circle cx="13" cy="303.5" r="1.3" fill="#c8c8c8"/>
 <rect x="9.5" y="302.5" width="3" height="3" fill="#c8c8c8"/>
 <!-- live paint / shapes -->
 <rect x="9" y="314" width="6" height="6" fill="#c8c8c8"/>
 <circle cx="17" cy="321" r="4.5" fill="#8a8a8a" stroke="#c4c4c4" stroke-width="1"/>
 <circle cx="21" cy="322.5" r="3.3" fill="#525252" stroke="#c4c4c4" stroke-width="1.1"/>
 <!-- artboard -->
 <path d="M12 332.5 V336 M9 336 H22 M12 336 V346 H23 V339 L20 336" fill="none" stroke="#c4c4c4" stroke-width="1.1"/>
 <path d="M13 337 H19.5 L22 339.5 V345 H13 Z" fill="#707070"/>
 <!-- zoom -->
 <circle cx="14.8" cy="359.8" r="4.6" fill="none" stroke="#c4c4c4" stroke-width="1.4"/>
 <path d="M18.2 363.2 L22.5 367.5" stroke="#c4c4c4" stroke-width="2"/>
 <!-- default fill stroke -->
 <rect x="4.5" y="371" width="6" height="6" fill="#ffffff" stroke="#111" stroke-width="1"/>
 <rect x="8" y="374.5" width="6" height="6" fill="#111" stroke="#ddd" stroke-width="0.8"/>
 <rect x="9.6" y="376.1" width="2.8" height="2.8" fill="#fff"/>
 <!-- swap -->
 <path d="M22.5 373.5 C27 373.5 28.5 375 28.5 380" fill="none" stroke="#c4c4c4" stroke-width="1.1"/>
 <path d="M22 371.5 V375.5 L20 373.5 Z M26.5 379.5 H30.5 L28.5 381.5 Z" fill="#c8c8c8"/>
 <!-- fill / stroke -->
 <rect x="5" y="392" width="15" height="14" fill="#ffffff"/>
 <rect x="12.8" y="399.6" width="15.4" height="15.4" fill="#111"/>
 <rect x="14.5" y="401.3" width="12" height="12" fill="none" stroke="#e8e8e8" stroke-width="1.1"/>
 <rect x="16.8" y="403.6" width="7.4" height="7.4" fill="#555" stroke="#111" stroke-width="1"/>
 <!-- color / gradient / none -->
 <rect x="5" y="421.5" width="6.5" height="6.5" fill="#222" stroke="#777" stroke-width="0.8"/>
 <rect x="12.8" y="421.5" width="6.5" height="6.5" fill="url(#gr)" stroke="#999" stroke-width="0.8"/>
 <rect x="20.8" y="421.5" width="6.5" height="6.5" fill="#fff"/>
 <path d="M21 427.8 L27.1 421.7" stroke="#e02020" stroke-width="1.3"/>
 <!-- draw mode -->
 <circle cx="16" cy="439.5" r="3" fill="none" stroke="#c4c4c4" stroke-width="1.1"/>
 <rect x="16" y="440" width="5.5" height="5" fill="#c8c8c8"/>
 <!-- screen mode -->
 <rect x="9.5" y="459.5" width="9" height="8" fill="none" stroke="#c4c4c4" stroke-width="1"/>
 <rect x="13.5" y="455.5" width="11" height="8" fill="#7a7a7a" stroke="#c4c4c4" stroke-width="1"/>
 <!-- more -->
 <circle cx="11.5" cy="488.5" r="1.3" fill="#c8c8c8"/>
 <circle cx="16.5" cy="488.5" r="1.3" fill="#c8c8c8"/>
 <circle cx="21.5" cy="488.5" r="1.3" fill="#c8c8c8"/>
</svg>

</body></html>
